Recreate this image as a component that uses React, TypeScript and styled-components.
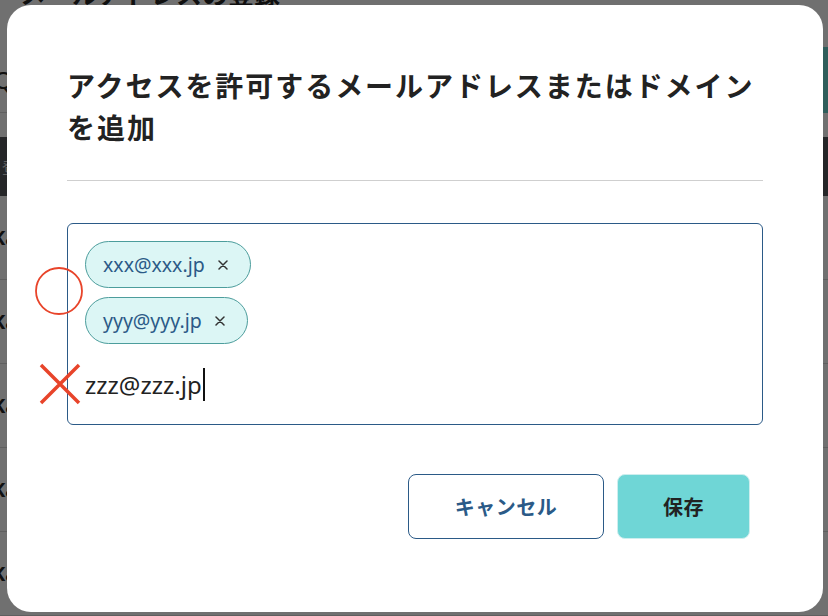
import React from 'react'
import styled, { createGlobalStyle } from 'styled-components'

const GlobalStyle = createGlobalStyle`
  html, body {
    margin: 0;
    padding: 0;
    width: 828px;
    height: 616px;
    overflow: hidden;
    font-family: 'Noto Sans', 'Noto Sans CJK JP', sans-serif;
  }
`

/* ---------- page behind the dialog ---------- */

const Page = styled.div`
  width: 828px;
  height: 616px;
  background: #ffffff;
  display: flex;
  flex-direction: column;
  overflow: hidden;
`

const PageTitle = styled.h1`
  margin: -22px 0 0 20px;
  font-family: 'Noto Sans CJK JP', sans-serif;
  font-size: 26px;
  font-weight: 700;
  line-height: 30px;
  color: #262626;
`

const SearchBar = styled.div`
  margin-top: 39px;
  height: 65px;
  display: flex;
  align-items: center;
  justify-content: space-between;
  border-bottom: 1px solid #d8d8d8;
  font-size: 24px;
  color: #262626;
`

const SearchButton = styled.div`
  width: 40px;
  height: 66px;
  background: #6bd3cf;
`

const TableHead = styled.div`
  margin-top: 24px;
  height: 60px;
  background: #56585c;
  color: #e0e0e0;
  font-size: 16px;
  display: flex;
  align-items: center;
  padding-left: 2px;
`

const TableRow = styled.div`
  height: 84px;
  border-bottom: 1px solid #d8d8d8;
  display: flex;
  align-items: center;
  font-size: 20px;
  font-weight: 700;
  color: #262626;
  margin-left: -8px;
`

const Backdrop = styled.div`
  position: fixed;
  inset: 0;
  background: rgba(0, 0, 0, 0.56);
`

/* ---------- dialog ---------- */

const Dialog = styled.div`
  position: fixed;
  left: 7px;
  top: 5px;
  width: 816px;
  height: 607px;
  box-sizing: border-box;
  background: #ffffff;
  border-radius: 24px;
  padding: 59px 60px 0 60px;
  display: flex;
  flex-direction: column;
`

const Title = styled.h2`
  margin: 0;
  font-family: 'Noto Sans CJK JP', sans-serif;
  font-size: 28px;
  font-weight: 700;
  line-height: 42px;
  letter-spacing: 1.95px;
  color: #222222;
`

const Divider = styled.hr`
  margin: 32px 0 0 0;
  border: none;
  border-top: 1.5px solid #cfcfcf;
`

const TagBox = styled.div`
  margin-top: 42px;
  height: 202px;
  box-sizing: border-box;
  border: 1px solid #2b5a87;
  border-radius: 6px;
  padding: 17px 17px;
  display: flex;
  flex-direction: column;
  align-items: flex-start;
  gap: 9px;
`

const Chip = styled.div`
  height: 47px;
  box-sizing: border-box;
  display: flex;
  align-items: center;
  gap: 13px;
  padding: 0 22px 0 17px;
  border: 1px solid #4c9d9c;
  border-radius: 24px;
  background: #dcf6f5;
  color: #2b5a87;
  font-size: 19.5px;
`

const ChipClose = styled.span`
  display: flex;
  width: 10px;
  height: 10px;
`

const EntryLine = styled.div`
  margin-top: 14px;
  display: flex;
  align-items: center;
  font-size: 24px;
  color: #222222;
  height: 34px;
`

const Caret = styled.span`
  width: 2px;
  height: 33px;
  background: #111111;
  margin-left: 1px;
`

const Actions = styled.div`
  margin-top: 49px;
  padding-right: 13px;
  display: flex;
  justify-content: flex-end;
  gap: 13px;
`

const Button = styled.button<{ $primary?: boolean }>`
  height: 65px;
  width: ${({ $primary }) => ($primary ? '133px' : '196px')};
  box-sizing: border-box;
  border-radius: 8px;
  border: 1px solid ${({ $primary }) => ($primary ? '#cdeeee' : '#2b5a87')};
  background: ${({ $primary }) => ($primary ? '#6fd6d6' : '#ffffff')};
  color: ${({ $primary }) => ($primary ? '#222222' : '#2b5a87')};
  font-family: 'Noto Sans CJK JP', sans-serif;
  font-size: 20px;
  font-weight: 700;
  letter-spacing: 0.5px;
  cursor: pointer;
`

/* ---------- annotation marks ---------- */

const Mark = styled.svg`
  position: fixed;
  overflow: visible;
`

function CloseIcon() {
  return (
    <ChipClose>
      <svg width="10" height="10" viewBox="0 0 10 10">
        <path d="M1 1 L9 9 M9 1 L1 9" stroke="#333" strokeWidth="1.5" strokeLinecap="round" />
      </svg>
    </ChipClose>
  )
}

export default function App() {
  const emails = ['xxx@xxx.jp', 'yyy@yyy.jp']
  const rows = [1, 2, 3, 4, 5]
  return (
    <>
      <GlobalStyle />
      <Page>
        <PageTitle>メールアドレスの登録</PageTitle>
        <SearchBar>
          <span style={{ marginLeft: -6 }}>Q</span>
          <SearchButton />
        </SearchBar>
        <TableHead>登</TableHead>
        {rows.map(r => (
          <TableRow key={r}>Ka</TableRow>
        ))}
      </Page>
      <Backdrop />
      <Dialog>
        <Title>
          アクセスを許可するメールアドレスまたはドメイン
          <br />
          を追加
        </Title>
        <Divider />
        <TagBox>
          {emails.map(email => (
            <Chip key={email}>
              {email}
              <CloseIcon />
            </Chip>
          ))}
          <EntryLine>
            zzz@zzz.jp
            <Caret />
          </EntryLine>
        </TagBox>
        <Actions>
          <Button>キャンセル</Button>
          <Button $primary>保存</Button>
        </Actions>
      </Dialog>
      <Mark width="48" height="48" viewBox="0 0 48 48" style={{ left: 35, top: 267 }}>
        <circle cx="24" cy="24" r="23" fill="none" stroke="#e8442a" strokeWidth="1.8" />
      </Mark>
      <Mark width="40" height="40" viewBox="0 0 40 40" style={{ left: 40, top: 364 }}>
        <path d="M1 1 L39 39 M39 1 L1 39" stroke="#e8442a" strokeWidth="3.5" />
      </Mark>
    </>
  )
}
